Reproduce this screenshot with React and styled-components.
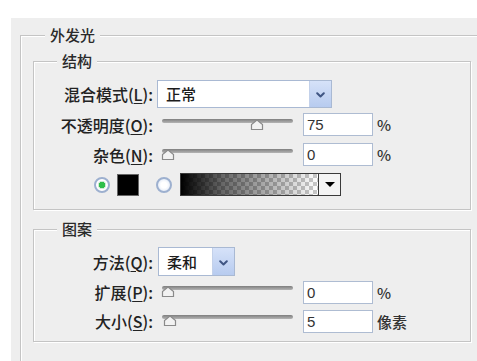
import React from 'react';
import styled, { createGlobalStyle } from 'styled-components';

const GlobalStyle = createGlobalStyle`
  html, body { margin: 0; padding: 0; background: #fff; }
  body { font-family: "Noto Sans CJK SC", "Liberation Sans", sans-serif; color: #1c1c1c; }
`;

const Page = styled.div`
  width: 477px;
  height: 361px;
  overflow: hidden;
  padding: 18px 0 0 11px;
  box-sizing: border-box;
  background: #fff;
`;

const Panel = styled.div`
  height: 100%;
  background: #eeeeee;
  padding: 8px 0 0 9px;
  box-sizing: border-box;
`;

const Outer = styled.fieldset`
  margin: 0;
  min-width: 0;
  height: 400px;
  border: 1px solid #c4c4c4;
  border-right: none;
  border-bottom: none;
  box-shadow: inset 1px 1px 0 #fff;
  padding: 8px 6px 0 12px;
`;

const Group = styled.fieldset`
  margin: ${p => p.$mt || 0}px 0 0 0;
  min-width: 0;
  border: 1px solid #c4c4c4;
  box-shadow: inset 1px 1px 0 #fff, 1px 1px 0 #fff;
  padding: 8px 0 ${p => p.$pb || 0}px 0;
`;

const Legend = styled.legend`
  margin-left: ${p => p.$ml}px;
  padding: 0 5px;
  font-size: 15px;
  font-weight: 500;
  line-height: 18px;
  color: #2a2a2a;
  background: #eeeeee;
`;

const Row = styled.div`
  display: flex;
  align-items: center;
  height: ${p => p.$h}px;
`;

const Label = styled.div`
  width: 119px;
  margin-right: ${p => p.$gap || 4}px;
  text-align: right;
  font-size: 16px;
  font-weight: 500;
  line-height: 20px;
  white-space: nowrap;
  color: #222;
  u { text-decoration-thickness: 1px; text-underline-offset: 2px; }
`;

const SelectBox = styled.div`
  display: flex;
  width: ${p => p.$w}px;
  height: ${p => p.$h}px;
  box-sizing: border-box;
  border: 1px solid #a9b9d3;
  background: #fff;
`;

const SelectText = styled.div`
  flex: 1;
  padding-left: 8px;
  font-size: 15px;
  font-weight: 500;
  line-height: ${p => p.$h - 2}px;
`;

const SelectButton = styled.div`
  width: 21px;
  display: flex;
  align-items: center;
  justify-content: center;
  padding-top: 2px;
  background: linear-gradient(#d6e2f9, #b7cbef);
  border-left: 1px solid #c3d1ea;
`;

const Chevron = () => (
  <svg width="9" height="6" viewBox="0 0 9 6">
    <path d="M1.2 1.2 L4.5 4.5 L7.8 1.2" fill="none" stroke="#3f5583" strokeWidth="2" strokeLinecap="round" strokeLinejoin="round" />
  </svg>
);

const Select = ({ value, w, h }) => (
  <SelectBox $w={w} $h={h}>
    <SelectText $h={h}>{value}</SelectText>
    <SelectButton><Chevron /></SelectButton>
  </SelectBox>
);

const SliderWrap = styled.div`
  position: relative;
  width: 140px;
  height: 22px;
  padding: 0 4px 0 5px;
  box-sizing: border-box;
`;

const Track = styled.div`
  margin-top: 5px;
  height: 4px;
  border-radius: 2px;
  background: linear-gradient(#7e7e7e, #b4b4b4);
`;

const Thumb = styled.svg`
  position: absolute;
  top: 5px;
`;

const Slider = ({ frac }) => (
  <SliderWrap>
    <Track />
    <Thumb width="14" height="12" viewBox="0 0 14 12" style={{ left: 5 + 6 + frac * 119 - 7 }}>
      <path d="M7 1 L12.5 5.5 L12.5 10.5 L1.5 10.5 L1.5 5.5 Z" fill="#f2f2f2" stroke="#8a8a8a" strokeWidth="1.2" />
    </Thumb>
  </SliderWrap>
);

const Field = styled.input`
  width: 70px;
  height: 23px;
  margin-left: 6px;
  box-sizing: border-box;
  border: 1px solid #aebcd2;
  background: #fff;
  padding: 0 0 0 3px;
  font-family: "Liberation Sans", sans-serif;
  font-size: 15px;
  color: #333;
  outline: none;
`;

const Unit = styled.span`
  margin-left: 4px;
  font-size: 15px;
  font-weight: 500;
  color: #333;
`;

const ColorRow = styled(Row)`
  padding-left: 60px;
`;

const Radio = styled.span`
  width: 16px;
  height: 16px;
  box-sizing: border-box;
  border-radius: 50%;
  border: 2px solid #9db0cf;
  background: ${p => p.$on
    ? 'radial-gradient(circle, #2fbf4a 0 3px, #cfe9d4 3.5px 4px, #fff 4.5px)'
    : 'radial-gradient(circle, #fff 0 3px, #e8eef8 6px)'};
  margin-right: ${p => p.$mr}px;
`;

const Swatch = styled.span`
  width: 22px;
  height: 22px;
  box-sizing: border-box;
  background: #000;
  border: 1px solid #666;
  margin-right: 17px;
`;

const GradientBox = styled.div`
  display: flex;
  width: 161px;
  height: 23px;
  box-sizing: border-box;
  border: 1px solid #3a3a3a;
`;

const GradientFill = styled.div`
  flex: 1;
  background:
    linear-gradient(to right, #000 0%, rgba(0,0,0,0.6) 30%, rgba(0,0,0,0) 100%),
    repeating-conic-gradient(#c9c9c9 0% 25%, #fff 0% 50%) 0 0 / 8px 8px;
`;

const GradientButton = styled.div`
  width: 21px;
  display: flex;
  align-items: center;
  justify-content: center;
  background: #f4f4f4;
  border-left: 1px solid #3a3a3a;
`;

const DownTriangle = styled.span`
  width: 0;
  height: 0;
  border-left: 5px solid transparent;
  border-right: 5px solid transparent;
  border-top: 5px solid #000;
`;

export default function App() {
  return (
    <Page>
      <GlobalStyle />
      <Panel>
        <Outer>
          <Legend $ml={12}>外发光</Legend>
          <Group $pb={9}>
            <Legend $ml={23}>结构</Legend>
            <Row $h={31}>
              <Label>混合模式(<u>L</u>):</Label>
              <Select value="正常" w={175} h={28} />
            </Row>
            <Row $h={31}>
              <Label>不透明度(<u>O</u>):</Label>
              <Slider frac={0.75} />
              <Field readOnly value="75" />
              <Unit>%</Unit>
            </Row>
            <Row $h={29}>
              <Label>杂色(<u>N</u>):</Label>
              <Slider frac={0} />
              <Field readOnly value="0" />
              <Unit>%</Unit>
            </Row>
            <ColorRow $h={31}>
              <Radio $on $mr={7} />
              <Swatch />
              <Radio $mr={8} />
              <GradientBox>
                <GradientFill />
                <GradientButton><DownTriangle /></GradientButton>
              </GradientBox>
            </ColorRow>
          </Group>
          <Group $mt={10} $pb={6}>
            <Legend $ml={23}>图案</Legend>
            <Row $h={31}>
              <Label $gap={5}>方法(<u>Q</u>):</Label>
              <Select value="柔和" w={77} h={29} />
            </Row>
            <Row $h={30}>
              <Label>扩展(<u>P</u>):</Label>
              <Slider frac={0} />
              <Field readOnly value="0" />
              <Unit>%</Unit>
            </Row>
            <Row $h={28}>
              <Label>大小(<u>S</u>):</Label>
              <Slider frac={0.02} />
              <Field readOnly value="5" />
              <Unit>像素</Unit>
            </Row>
          </Group>
        </Outer>
      </Panel>
    </Page>
  );
}
